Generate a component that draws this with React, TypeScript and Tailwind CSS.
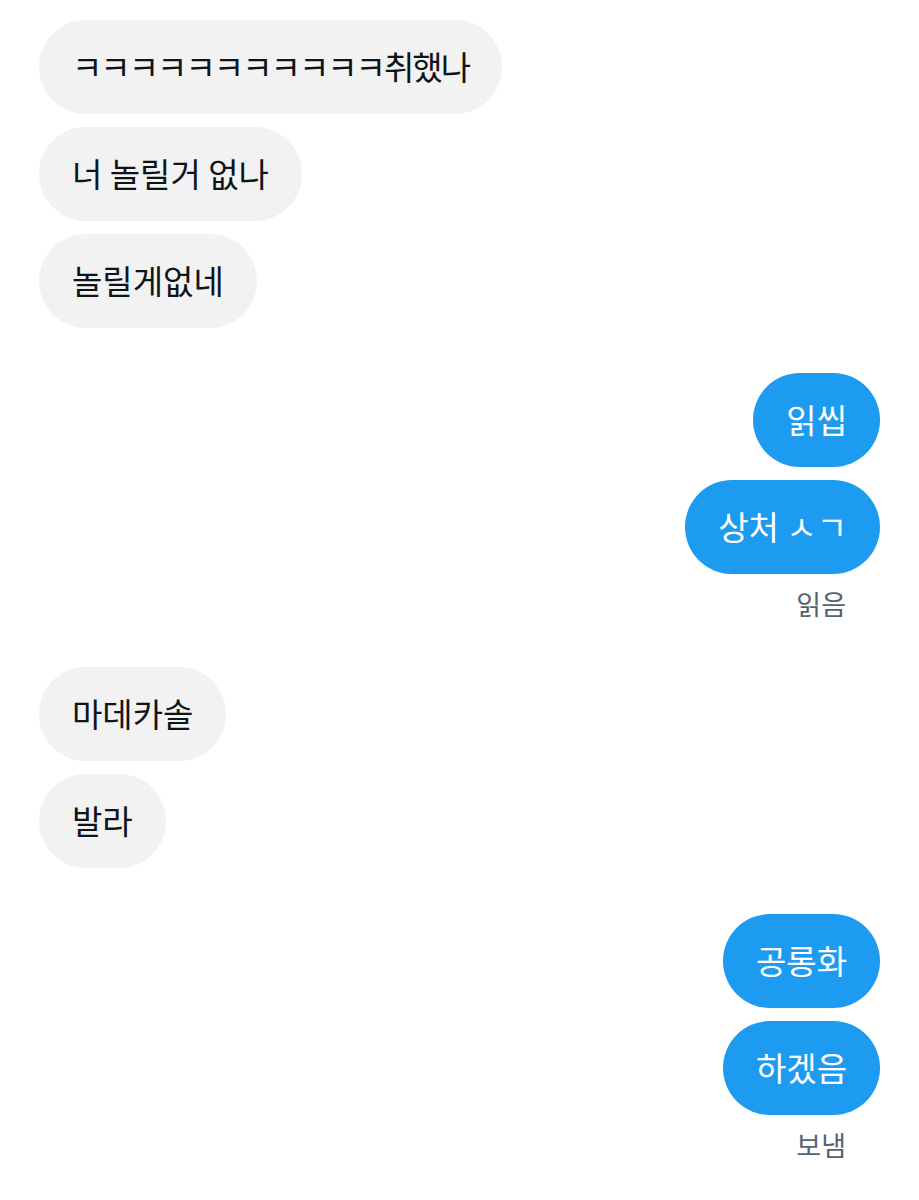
const font = { fontFamily: '"Noto Sans CJK KR", "Noto Sans", sans-serif' };

type Msg = { text: string; mine: boolean; gapTop?: string; status?: string; tight?: boolean };

const messages: Msg[] = [
    { text: "ㅋㅋㅋㅋㅋㅋㅋㅋㅋㅋㅋ취했나", mine: false, tight: true },
    { text: "너 놀릴거 없나", mine: false },
    { text: "놀릴게없네", mine: false },
    { text: "읽씹", mine: true, gapTop: "mt-[32px]" },
    { text: "상처 ㅅㄱ", mine: true, status: "읽음" },
    { text: "마데카솔", mine: false, gapTop: "mt-[32px]" },
    { text: "발라", mine: false },
    { text: "공롱화", mine: true, gapTop: "mt-[33px]" },
    { text: "하겠음", mine: true, status: "보냄" },
];

function Bubble({ m }: { m: Msg }) {
    return (
        <div className={`flex flex-col ${m.mine ? "items-end" : "items-start"} ${m.gapTop ?? ""}`}>
            <div
                className={`h-[94px] px-[33px] flex items-center rounded-full text-[33px] whitespace-nowrap ${
                    m.tight ? "tracking-[-2px]" : ""
                } ${m.mine ? "bg-[#1d9bf0] text-white" : "bg-[#f2f2f2] text-[#0f1419]"}`}
            >
                {m.text}
            </div>
            {m.status && (
                <div className="text-[27px] text-[#536471] pr-[34px] pt-[12px] leading-[36px]">
                    {m.status}
                </div>
            )}
        </div>
    );
}

export default function App() {
    return (
        <div className="w-[919px] h-[1200px] bg-white px-[39px] pt-[20px] flex flex-col gap-[13px]" style={font}>
            {messages.map((m, i) => (
                <Bubble key={i} m={m} />
            ))}
        </div>
    );
}
